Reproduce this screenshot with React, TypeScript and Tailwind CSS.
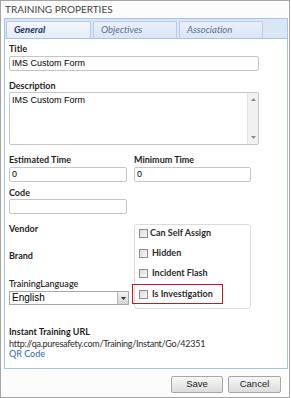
const label = 'block h-[12px] text-[9px] leading-[12px] font-bold text-[#1e1e1e]';
const input =
  'h-[15px] rounded-[2px] border border-[#c6c6c6] bg-white pl-[2px] text-[9px] leading-[13px] text-black [font-family:"Liberation_Sans",Arial,sans-serif]';

function Checkbox() {
  return (
    <span className="block h-[9px] w-[9px] shrink-0 border border-[#8e8e8e] bg-gradient-to-br from-[#dcdcdc] to-[#f8f8f8]" />
  );
}

function CheckRow({ text, gap = 'gap-[4px]' }: { text: string; gap?: string }) {
  return (
    <div className={`flex h-[16px] items-center ${gap}`}>
      <Checkbox />
      <span className="text-[9px] font-bold text-[#2a2a2a]">{text}</span>
    </div>
  );
}

function Tab({ text, active }: { text: string; active?: boolean }) {
  return (
    <div
      className={
        active
          ? 'flex h-[17px] w-[85px] items-center rounded-t-[2px] border border-b-0 border-[#b3c9e7] bg-gradient-to-b from-[#f4f8fd] to-[#e3ecf8] pl-[7px] text-[9.5px] font-bold italic text-[#1d3668]'
          : 'flex h-[17px] w-[84px] items-center rounded-t-[2px] border border-b-0 border-[#b8cdea] bg-gradient-to-b from-[#e9f0fa] to-[#d9e5f5] pl-[7px] text-[9.5px] italic text-[#5b6f92]'
      }
    >
      {text}
    </div>
  );
}

export default function App() {
  return (
    <div className="flex h-[398px] w-[290px] flex-col border border-[#a5a5a5] bg-[#fcfcfc] text-[#222] [font-family:Lato,'Noto_Sans',sans-serif]">
      <div className="h-[17px] pl-[4px] pt-[3px] text-[10px] leading-[11px] uppercase text-[#444]">
        Training Properties
      </div>

      <div className="ml-[3px] mr-[1px] flex h-[20px] items-end gap-[2px] border border-b-0 border-[#a8c3e6] bg-[#dae6f6] pl-[1px]">
        <Tab text="General" active />
        <Tab text="Objectives" />
        <Tab text="Association" />
      </div>

      <div className="ml-[3px] mr-[1px] flex h-[331px] flex-col border border-[#a8c3e6] bg-white pl-[4px] pt-[4px]">
        <span className={label}>Title</span>
        <div className={`mt-px w-[250px] ${input}`}>IMS Custom Form</div>

        <span className={`mt-[9px] ${label}`}>Description</span>
        <div className="flex h-[53px] w-[250px] rounded-[2px] border border-[#c6c6c6] bg-white">
          <div className="flex-1 pl-[2px] pt-[2px] text-[9px] leading-[11px] text-black [font-family:'Liberation_Sans',Arial,sans-serif]">
            IMS Custom Form
          </div>
          <div className="flex w-[11px] flex-col items-center justify-between border-l border-[#e4e4e4] bg-[#f1f1f1] py-[5px]">
            <svg width="5" height="3" viewBox="0 0 5 3">
              <path d="M0 3 L2.5 0 L5 3 Z" fill="#8a8a8a" />
            </svg>
            <svg width="5" height="3" viewBox="0 0 5 3">
              <path d="M0 0 L2.5 3 L5 0 Z" fill="#8a8a8a" />
            </svg>
          </div>
        </div>

        <div className="mt-[9px] grid grid-cols-[125px_1fr]">
          <div className="flex flex-col">
            <span className={label}>Estimated Time</span>
            <div className={`mt-px w-[118px] ${input}`}>0</div>
            <span className={`mt-[5px] ${label}`}>Code</span>
            <div className={`w-[118px] ${input}`} />
          </div>
          <div className="flex flex-col">
            <span className={label}>Minimum Time</span>
            <div className={`mt-px w-[117px] ${input}`}>0</div>
          </div>
        </div>

        <div className="mt-[9px] grid grid-cols-[125px_1fr]">
          <div className="flex flex-col">
            <span className={`h-[27px] ${label}`}>Vendor</span>
            <span className={`h-[28px] ${label}`}>Brand</span>
            <span className="block h-[12px] text-[9px] leading-[12px] font-semibold text-[#2a2a2a]">
              TrainingLanguage
            </span>
            <div className="mt-px flex h-[14px] w-[120px] border border-[#a9a9a9] bg-white">
              <span className="flex-1 pl-[2px] text-[10px] leading-[12px] text-black [font-family:'Liberation_Sans',Arial,sans-serif]">
                English
              </span>
              <span className="flex w-[11px] items-center justify-center border-l border-[#b5b5b5] bg-gradient-to-b from-[#f3f3f3] to-[#d4d4d4]">
                <svg width="5" height="3" viewBox="0 0 5 3">
                  <path d="M0 0 L2.5 3 L5 0 Z" fill="#333" />
                </svg>
              </span>
            </div>
          </div>
          <div className="mt-px flex h-[85px] w-[117px] flex-col gap-[4px] rounded-[3px] border border-[#dcdcdc] bg-white pl-[4px]">
            <CheckRow text="Can Self Assign" gap="gap-[2px]" />
            <CheckRow text="Hidden" />
            <CheckRow text="Incident Flash" />
            <div className="-ml-[7px] -mt-px flex h-[20px] w-[91px] items-center gap-[4px] border border-[#b22222] pl-[6px]">
              <Checkbox />
              <span className="text-[9px] font-bold text-[#2a2a2a]">Is Investigation</span>
            </div>
          </div>
        </div>

        <span className={`mt-[17px] ${label}`}>Instant Training URL</span>
        <span className="mt-px block h-[10px] text-[9px] leading-[10px] tracking-[-0.25px] text-[#2a2a2a]">
          http://qa.puresafety.com/Training/Instant/Go/42351
        </span>
        <span className="block h-[10px] text-[9px] leading-[10px] text-[#2a6db5]">QR Code</span>
      </div>

      <div className="flex justify-end gap-[5px] pr-[8px] pt-[7px]">
        <button className="h-[17px] w-[52px] rounded-[2px] border border-[#a6a6a6] bg-gradient-to-b from-[#f7f7f7] to-[#dcdcdc] text-[9.5px] text-[#222] [font-family:'Liberation_Sans',Arial,sans-serif]">
          Save
        </button>
        <button className="h-[17px] w-[53px] rounded-[2px] border border-[#a6a6a6] bg-gradient-to-b from-[#f7f7f7] to-[#dcdcdc] text-[9.5px] text-[#222] [font-family:'Liberation_Sans',Arial,sans-serif]">
          Cancel
        </button>
      </div>
    </div>
  );
}
